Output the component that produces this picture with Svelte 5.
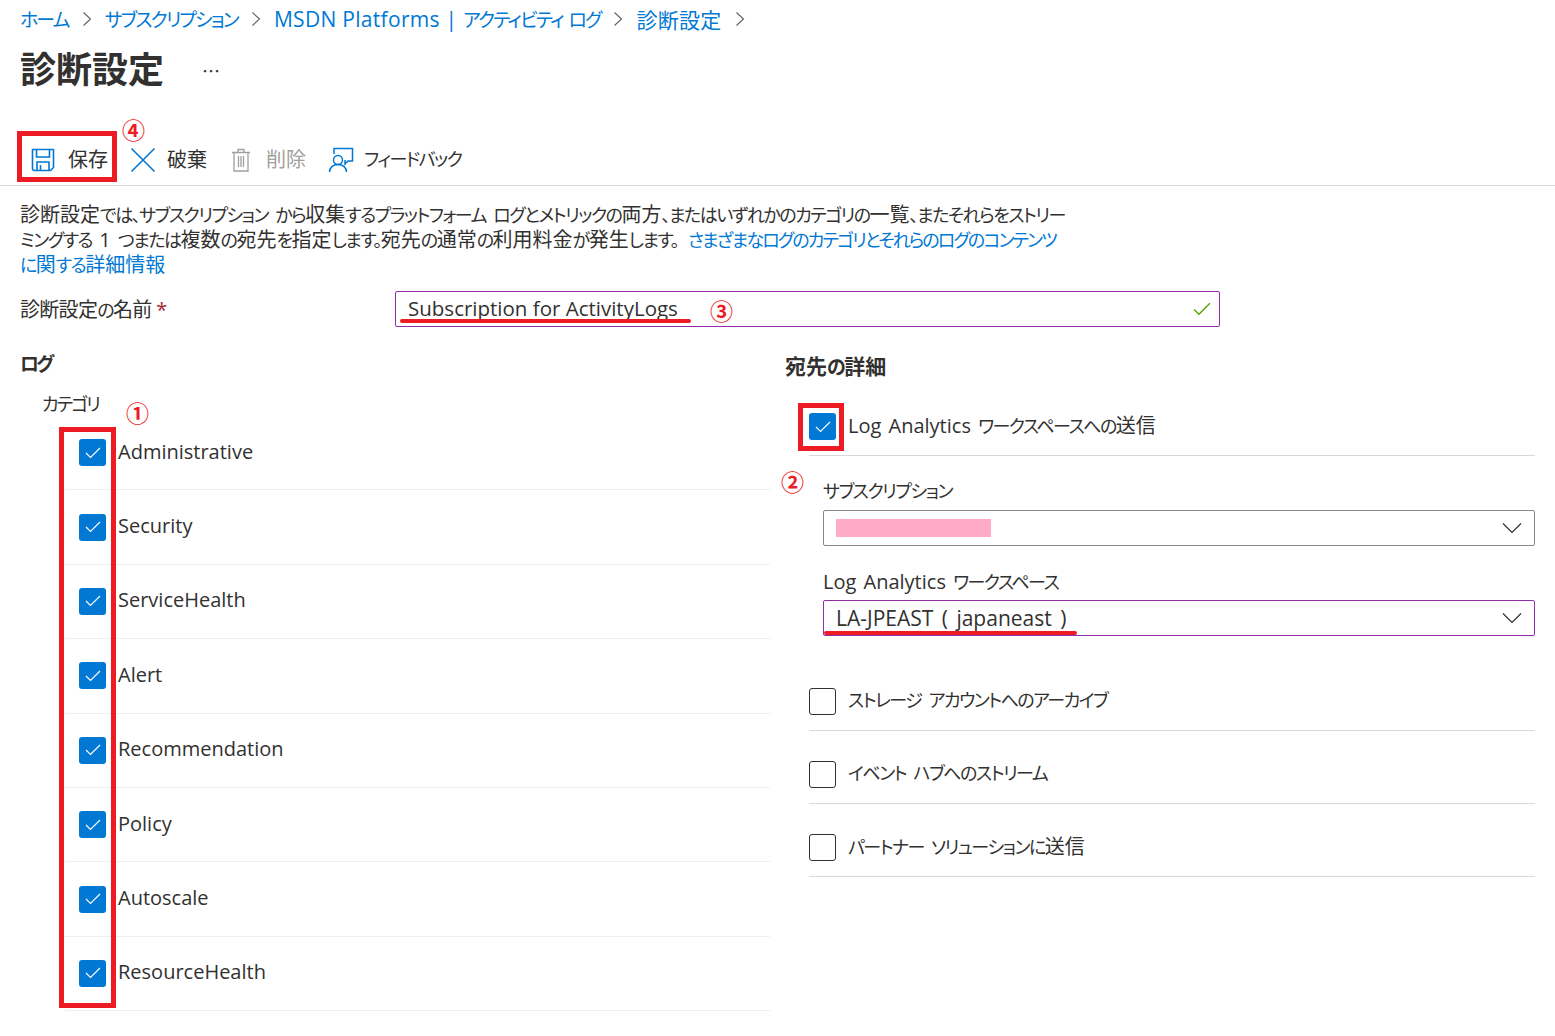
<script lang="ts">
  const crumbs = ['ホーム', 'サブスクリプション', 'MSDN Platforms | アクティビティ ログ', '診断設定'];
  const categories = ['Administrative', 'Security', 'ServiceHealth', 'Alert', 'Recommendation', 'Policy', 'Autoscale', 'ResourceHealth'];
  const others = ['ストレージ アカウントへのアーカイブ', 'イベント ハブへのストリーム', 'パートナー ソリューションに送信'];

  // Noto's kana are wider than the portal's UI font, so kana runs get their own size and tracking
  function runs(text: string) {
    return text.split(/([\u3040-\u30ff、。]+)/).filter(Boolean).map((part) => ({
      text: part,
      kana: /[\u3040-\u30ff、。]/.test(part),
    }));
  }
</script>

{#snippet jp(text)}
  {#each runs(text) as run}<span class:kana={run.kana}>{run.text}</span>{/each}
{/snippet}

<div class="page">
  <nav class="breadcrumb">
    {#each crumbs as crumb}
      <a href="#top">{@render jp(crumb)}</a>
      <svg class="crumb-sep" viewBox="0 0 10 16" width="10" height="16"><path d="M1.5 1.5 8.5 8l-7 6.5" fill="none" stroke="#605e5c" stroke-width="1.1" /></svg>
    {/each}
  </nav>

  <header class="title-row">
    <h1>診断設定</h1>
    <span class="more">⋯</span>
  </header>

  <div class="toolbar">
    <button class="tool save">
      <svg viewBox="0 0 24 24" width="24" height="24" fill="none" stroke="#0078d4" stroke-width="1.6">
        <path d="M1.5 1.5h21v18l-3 3h-16a2 2 0 0 1-2-2z" />
        <path d="M5.5 2v7h13V2M6 22.500v-8.500h12v8.500M9.500 17v5" />
      </svg>
      <span class="tool-label">保存</span>
      <span class="mark mark-save">④</span>
    </button>
    <button class="tool discard">
      <svg viewBox="0 0 26 26" width="26" height="26" fill="none" stroke="#0078d4" stroke-width="1.6"><path d="M1.500 1.500 24.500 24.500M24.500 1.500 1.500 24.500" /></svg>
      <span class="tool-label">破棄</span>
    </button>
    <button class="tool del">
      <svg viewBox="0 0 20 24" width="20" height="24" fill="none" stroke="#a19f9d" stroke-width="1.300">
        <path d="M1 4.500h18M3 4.500V23h14V4.500M7 4.500V1.500h6v3M7.500 8v11M10 8v11M12.500 8v11" />
      </svg>
      <span class="tool-label">削除</span>
    </button>
    <button class="tool feedback">
      <svg viewBox="0 0 26 26" width="26" height="26" fill="none" stroke="#0078d4" stroke-width="1.500">
        <path d="M6 7V1.500h18.500v12.500H20l-3 3v-4" />
        <circle cx="10" cy="13" r="4.500" />
        <path d="M1.500 25c0-4.500 3.500-7.500 8.500-7.500s8.500 3 8.500 7.500" />
      </svg>
      <span class="tool-label">{@render jp('フィードバック')}</span>
    </button>
  </div>

  <div class="description">
    <p>{@render jp('診断設定では、サブスクリプション から収集するプラットフォーム ログとメトリックの両方、またはいずれかのカテゴリの一覧、またそれらをストリー')}</p>
    <p>{@render jp('ミングする 1 つまたは複数の宛先を指定します。宛先の通常の利用料金が発生します。')}<a class="more-link" href="#top">{@render jp('さまざまなログのカテゴリとそれらのログのコンテンツ')}</a></p>
    <p><a href="#top">{@render jp('に関する詳細情報')}</a></p>
  </div>

  <div class="name-row">
    <label for="setting-name">{@render jp('診断設定の名前')} <span class="required">*</span></label>
    <div class="field purple name-field">
      <input id="setting-name" value="Subscription for ActivityLogs" />
      <span class="underline underline-name"></span>
      <span class="mark mark-name">③</span>
      <svg class="valid" viewBox="0 0 20 16" width="18" height="14"><path d="M1 8.500 6.500 14 19 1.500" fill="none" stroke="#57a300" stroke-width="1.500" /></svg>
    </div>
  </div>

  <div class="columns">
    <section class="logs">
      <h2>{@render jp('ログ')}</h2>
      <div class="category-title">{@render jp('カテゴリ')} <span class="mark mark-cat">①</span></div>
      <div class="category-list">
        <span class="red-box box-categories"></span>
        {#each categories as category}
          <div class="category-row">
            <span class="checkbox checked">
              <svg viewBox="0 0 16 12" width="16" height="12"><path d="M1 6l4.500 4.500L15 1" fill="none" stroke="#fff" stroke-width="1.200" /></svg>
            </span>
            <span class="row-text">{category}</span>
          </div>
        {/each}
      </div>
    </section>

    <section class="destination">
      <h2>{@render jp('宛先の詳細')}</h2>
      <div class="dest-row">
        <span class="checkbox checked">
          <svg viewBox="0 0 16 12" width="16" height="12"><path d="M1 6l4.500 4.500L15 1" fill="none" stroke="#fff" stroke-width="1.200" /></svg>
          <span class="red-box box-la"></span>
        </span>
        <span class="row-text">{@render jp('Log Analytics ワークスペースへの送信')}</span>
      </div>

      <div class="dest-fields">
        <span class="mark mark-dest">②</span>
        <div class="field-label">{@render jp('サブスクリプション')}</div>
        <div class="field select">
          <span class="masked"></span>
          <svg class="chevron" viewBox="0 0 20 12" width="20" height="12"><path d="M1 1.500 10 10.500 19 1.500" fill="none" stroke="#323130" stroke-width="1.200" /></svg>
        </div>
        <div class="field-label second">{@render jp('Log Analytics ワークスペース')}</div>
        <div class="field select purple">
          <span class="select-value">LA-JPEAST ( japaneast )</span>
          <span class="underline underline-la"></span>
          <svg class="chevron" viewBox="0 0 20 12" width="20" height="12"><path d="M1 1.500 10 10.500 19 1.500" fill="none" stroke="#323130" stroke-width="1.200" /></svg>
        </div>
      </div>

      <div class="other-list">
        {#each others as other}
          <div class="dest-row">
            <span class="checkbox"></span>
            <span class="row-text">{@render jp(other)}</span>
          </div>
        {/each}
      </div>
    </section>
  </div>
</div>

<style>
  :global(body) {
    background: #fff;
    font-family: "Open Sans", "Noto Sans CJK JP", sans-serif;
    font-feature-settings: "palt";
    color: #323130;
  }

  .page {
    height: 1036px;
    overflow: hidden;
    font-size: 20px;
    --kana: -1.5px;
  }

  .kana {
    font-size: 0.9em;
    line-height: 1;
    letter-spacing: var(--kana);
  }

  a {
    color: #0078d4;
    text-decoration: none;
  }

  .breadcrumb {
    display: flex;
    align-items: center;
    gap: 13px;
    height: 38px;
    padding-left: 20px;
    font-size: 21px;
    letter-spacing: 0.3px;
    --kana: -1.8px;
  }

  .crumb-sep {
    flex-shrink: 0;
  }

  .title-row {
    display: flex;
    align-items: center;
    height: 63px;
    padding-left: 20px;
  }

  h1 {
    margin: 0;
    font-size: 36px;
    font-weight: 700;
    line-height: 1;
    color: #323130;
  }

  .more {
    margin-left: 38px;
    font-size: 18px;
    color: #323130;
  }

  .toolbar {
    display: flex;
    align-items: center;
    height: 85px;
    padding: 33px 0 0 31px;
    box-sizing: border-box;
    border-bottom: 1px solid #d6d6d6;
  }

  .tool {
    position: relative;
    display: flex;
    align-items: center;
    gap: 12px;
    padding: 0;
    border: none;
    background: none;
    font: inherit;
    font-size: 20px;
    color: #323130;
  }

  .tool-label {
    margin-bottom: 2px;
  }

  .save {
    width: 99px;
    gap: 13px;
  }

  .save::after {
    content: "";
    position: absolute;
    left: -14px;
    top: -13px;
    width: 100px;
    height: 51px;
    border: 5px solid #ed1c24;
    box-sizing: border-box;
  }

  .discard {
    gap: 11px;
  }

  .del {
    margin-left: 24px;
    gap: 15px;
    color: #a19f9d;
  }

  .feedback {
    margin-left: 22px;
    gap: 10px;
  }

  .mark {
    position: absolute;
    font-size: 23px;
    font-weight: 700;
    line-height: 1;
    color: #ed1c24;
  }

  .mark-save {
    left: 91px;
    top: -25px;
  }

  .description {
    margin: 16px 0 0 20px;
    font-size: 20px;
    line-height: 25px;
    word-spacing: 2px;
    white-space: nowrap;
  }

  .description p {
    margin: 0;
  }

  .more-link {
    margin-left: 10px;
    --kana: -1.9px;
  }

  .name-row {
    display: flex;
    align-items: center;
    margin-top: 14px;
    padding-left: 20px;
  }

  label {
    width: 375px;
    margin-bottom: 2px;
    font-size: 20px;
    letter-spacing: -0.7px;
  }

  .required {
    color: #a4262c;
  }

  .field {
    position: relative;
    box-sizing: border-box;
    border: 1px solid #8a8886;
    border-radius: 2px;
  }

  .purple {
    border-color: #8f2da8;
  }

  .name-field {
    width: 825px;
    height: 36px;
  }

  input {
    width: 700px;
    height: 100%;
    box-sizing: border-box;
    padding: 0 12px 2px;
    border: none;
    outline: none;
    background: transparent;
    font: inherit;
    font-size: 20.5px;
    color: #323130;
  }

  .underline {
    position: absolute;
    height: 4px;
    border-radius: 2px;
    background: #ed1c24;
  }

  .underline-name {
    left: 4px;
    top: 27px;
    width: 291px;
  }

  .mark-name {
    left: 314px;
    top: 8px;
  }

  .valid {
    position: absolute;
    right: 8px;
    top: 10px;
  }

  .columns {
    display: grid;
    grid-template-columns: 770px 750px;
    gap: 15px;
    margin-top: 21px;
  }

  h2 {
    margin: 0;
    font-size: 21px;
    font-weight: 700;
    line-height: 30px;
    color: #323130;
  }

  .logs h2 {
    margin-left: 20px;
    --kana: -3px;
  }

  .category-title {
    position: relative;
    margin: 15px 0 0 42px;
    font-size: 20px;
    line-height: 22px;
    --kana: -1.9px;
  }

  .mark-cat {
    left: 84px;
    top: 9px;
  }

  .category-list {
    position: relative;
    margin-top: 1px;
  }

  .red-box {
    position: absolute;
    box-sizing: border-box;
    border: 5px solid #ed1c24;
  }

  .box-categories {
    left: 59px;
    top: 11px;
    width: 57px;
    height: 581px;
  }

  .category-row {
    display: flex;
    align-items: center;
    gap: 12px;
    height: 74.4px;
    box-sizing: border-box;
    margin-left: 65px;
    padding-left: 14px;
    border-bottom: 1px solid #f0efee;
  }

  .row-text {
    margin-bottom: 3px;
  }

  .checkbox {
    position: relative;
    display: flex;
    align-items: center;
    justify-content: center;
    flex-shrink: 0;
    width: 27px;
    height: 27px;
    box-sizing: border-box;
    border: 1px solid #323130;
    border-radius: 3px;
  }

  .checked {
    border: none;
    background: #0078d4;
  }

  .box-la {
    left: -11px;
    top: -10px;
    width: 46px;
    height: 48px;
  }

  .destination h2 {
    margin-top: 3px;
    margin-bottom: 2px;
  }

  .dest-row {
    display: flex;
    align-items: center;
    gap: 12px;
    height: 73px;
    box-sizing: border-box;
    margin-left: 24px;
    padding-top: 15px;
    border-bottom: 1px solid #d9d9d9;
    word-spacing: 2px;
  }

  .dest-row .row-text {
    margin-bottom: 4px;
  }

  .dest-fields {
    position: relative;
    padding-left: 38px;
    padding-top: 20px;
  }

  .mark-dest {
    left: -4px;
    top: 15px;
  }

  .field-label {
    font-size: 20px;
    line-height: 30px;
    margin-bottom: 4px;
    word-spacing: 2px;
  }

  .field-label.second {
    margin-top: 21px;
    margin-bottom: 3px;
  }

  .select {
    display: flex;
    align-items: center;
    height: 36px;
    padding-left: 12px;
  }

  .masked {
    width: 155px;
    height: 18px;
    background: #ffabc8;
  }

  .select-value {
    font-size: 21px;
    word-spacing: 3px;
  }

  .underline-la {
    left: 0;
    top: 30px;
    width: 253px;
  }

  .chevron {
    position: absolute;
    top: 11px;
    right: 12px;
  }

  .other-list {
    margin-top: 22px;
  }
</style>
